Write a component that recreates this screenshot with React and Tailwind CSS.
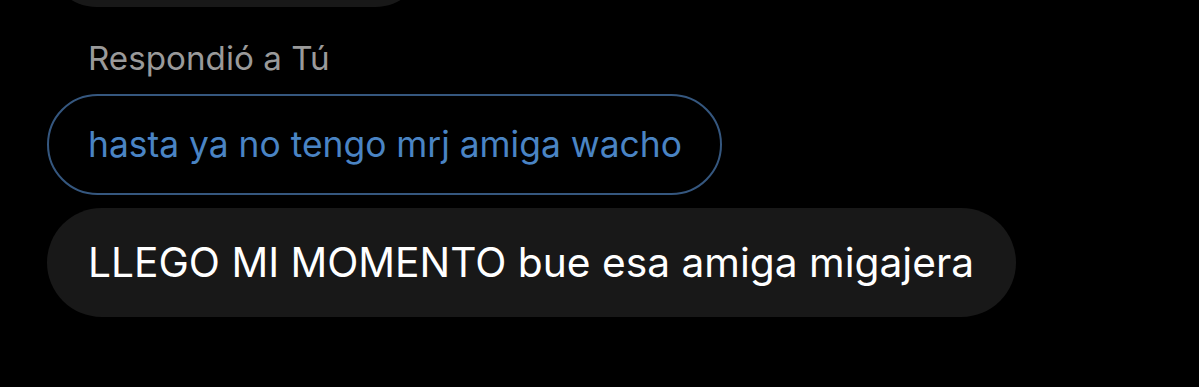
import React from "react";

const font = { fontFamily: "Inter, Roboto, 'Noto Sans', sans-serif" };

export default function App() {
  return (
    <div
      className="w-[1199px] h-[387px] overflow-hidden bg-black pl-[47px]"
      style={font}
    >
      {/* Burbuja anterior (cortada arriba) */}
      <div className="-mt-[93px] h-[100px] w-[378px] rounded-[50px] bg-[#181818]" />

      {/* Respondió a */}
      <div className="mt-[32px] pl-[41px] text-[33.2px] leading-[38px] text-[#9a9a9a]">
        Respondió a Tú
      </div>

      {/* Mensaje citado */}
      <div className="mt-[17px] inline-flex h-[101px] items-center rounded-full border-2 border-[#35577f] pl-[39px] pr-[38px]">
        <span className="text-[35.4px] text-[#4a84c4]">
          hasta ya no tengo mrj amiga wacho
        </span>
      </div>

      {/* Respuesta */}
      <div className="mt-[13px]">
        <div className="inline-flex h-[109px] items-center rounded-full bg-[#181818] pl-[41px] pr-[42px]">
          <span className="text-[40.7px] text-white">
            LLEGO MI MOMENTO bue esa amiga migajera
          </span>
        </div>
      </div>
    </div>
  );
}
